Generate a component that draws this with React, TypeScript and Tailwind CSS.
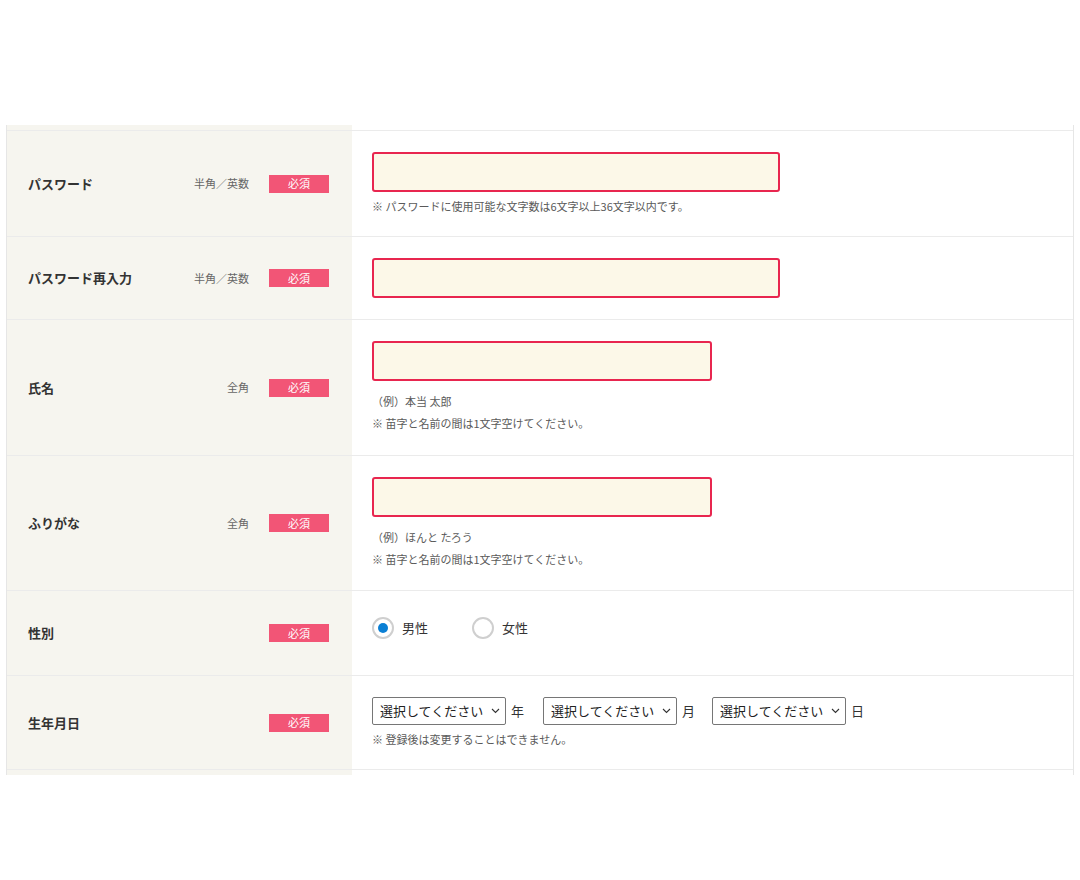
import { FC, ReactNode } from 'react'

const FONT = '"Noto Sans CJK JP", "Noto Sans", sans-serif'

// Pink "必須" tag shown on every required row.
const Required: FC = () => (
  <span className="inline-flex items-center justify-center w-[60px] h-[18px] bg-[#f25576] text-white text-[11px] leading-none">
    必須
  </span>
)

interface RowProps {
  label: string
  sub?: string
  children: ReactNode
  cellClass: string
}

const Row: FC<RowProps> = ({ label, sub, children, cellClass }) => (
  <div className="flex border-t border-[#ebebeb]">
    <div className="w-[345px] shrink-0 bg-[#f6f5ef] flex items-center pl-[21px] pr-[23px]">
      <span className="text-[13px] font-bold text-[#333]">{label}</span>
      <span className="ml-auto mr-[20px] text-[11px] text-[#666]">{sub}</span>
      <Required />
    </div>
    <div className={`flex-1 pl-[20px] ${cellClass}`}>{children}</div>
  </div>
)

const TextBox: FC<{ w: string }> = ({ w }) => (
  <input
    type="text"
    className={`block ${w} h-[40px] rounded-[3px] border-2 border-[#e8264f] bg-[#fcf8e8] outline-none`}
  />
)

const Note: FC<{ children: ReactNode; className?: string }> = ({ children, className }) => (
  <p className={`text-[11px] leading-[16px] text-[#5a5a5a] ${className || ''}`}>{children}</p>
)

const Radio: FC<{ checked?: boolean; label: string }> = ({ checked, label }) => (
  <label className="flex items-center">
    <span className="w-[22px] h-[22px] rounded-full border-2 border-[#cfcfcf] bg-white flex items-center justify-center">
      {checked && <span className="w-[10px] h-[10px] rounded-full bg-[#0a7fd4]" />}
    </span>
    <span className="ml-[8px] text-[13px] text-[#333]">{label}</span>
  </label>
)

const Select: FC = () => (
  <div className="relative w-[134px] h-[28px]">
    <select className="appearance-none w-full h-full rounded-[2px] border border-[#767676] bg-white pl-[7px] text-[13px] text-[#222] outline-none">
      <option>選択してください</option>
    </select>
    <svg
      className="absolute right-[6px] top-[11px] pointer-events-none"
      width="9"
      height="6"
      viewBox="0 0 9 6"
      fill="none"
    >
      <path d="M1 1l3.5 3.5L8 1" stroke="#333" strokeWidth="1.1" />
    </svg>
  </div>
)

export default function App() {
  return (
    <div className="w-[1080px] h-[880px] bg-white" style={{ fontFamily: FONT }}>
      <div className="pt-[125px]">
        <div className="ml-[6px] w-[1068px] border-x border-[#e6e6e6]">
          {/* tail of the row above, scrolled out of view */}
          <div className="flex h-[5px]">
            <div className="w-[345px] bg-[#f6f5ef]" />
          </div>

          <Row label="パスワード" sub="半角／英数" cellClass="pt-[21px] pb-[22px]">
            <TextBox w="w-[408px]" />
            <Note className="mt-[6px]">※ パスワードに使用可能な文字数は6文字以上36文字以内です。</Note>
          </Row>

          <Row label="パスワード再入力" sub="半角／英数" cellClass="pt-[21px] pb-[21px]">
            <TextBox w="w-[408px]" />
          </Row>

          <Row label="氏名" sub="全角" cellClass="pt-[21px] pb-[24px]">
            <TextBox w="w-[340px]" />
            <Note className="mt-[12px]">（例）本当 太郎</Note>
            <Note className="mt-[6px]">※ 苗字と名前の間は1文字空けてください。</Note>
          </Row>

          <Row label="ふりがな" sub="全角" cellClass="pt-[21px] pb-[23px]">
            <TextBox w="w-[340px]" />
            <Note className="mt-[12px]">（例）ほんと たろう</Note>
            <Note className="mt-[6px]">※ 苗字と名前の間は1文字空けてください。</Note>
          </Row>

          <Row label="性別" cellClass="pt-[26px] pb-[36px]">
            <div className="flex items-center gap-[44px]">
              <Radio checked label="男性" />
              <Radio label="女性" />
            </div>
          </Row>

          <Row label="生年月日" cellClass="pt-[21px] pb-[22px]">
            <div className="flex items-center text-[13px] text-[#333]">
              <Select />
              <span className="ml-[5px] mr-[19px]">年</span>
              <Select />
              <span className="ml-[5px] mr-[17px]">月</span>
              <Select />
              <span className="ml-[5px]">日</span>
            </div>
            <Note className="mt-[6px]">※ 登録後は変更することはできません。</Note>
          </Row>

          {/* head of the next row, cut off by the viewport */}
          <div className="flex h-[6px] border-t border-[#ebebeb]">
            <div className="w-[345px] bg-[#f6f5ef]" />
          </div>
        </div>
      </div>
    </div>
  )
}
